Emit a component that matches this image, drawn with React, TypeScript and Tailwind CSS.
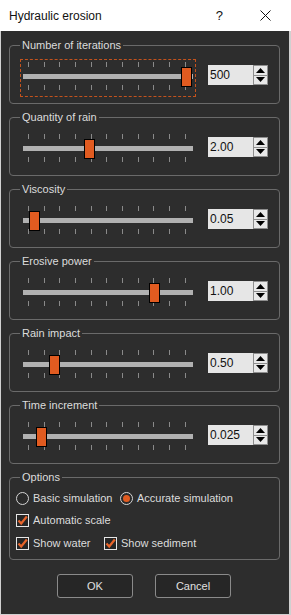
import React from "react";

type SliderRow = {
  label: string;
  value: string;
  thumb: number;
  focus?: boolean;
};

const rows: SliderRow[] = [
  { label: "Number of iterations", value: "500", thumb: 161, focus: true },
  { label: "Quantity of rain", value: "2.00", thumb: 64 },
  { label: "Viscosity", value: "0.05", thumb: 9 },
  { label: "Erosive power", value: "1.00", thumb: 129 },
  { label: "Rain impact", value: "0.50", thumb: 29 },
  { label: "Time increment", value: "0.025", thumb: 16 },
];

const ticks = [8, 24, 39, 55, 71, 86, 102, 118, 133, 149, 165];

const font = { fontFamily: '"Liberation Sans", Arial, sans-serif' };

const Slider = ({ thumb, focus }: { thumb: number; focus?: boolean }) => (
  <div
    className={
      "relative mt-[13px] h-[38px] w-[176px] shrink-0 " +
      (focus ? "border border-dashed border-[#c4531d]" : "border border-transparent")
    }
  >
    {ticks.map((t) => (
      <React.Fragment key={t}>
        <div className="absolute top-[2px] h-[5px] w-px bg-[#8a8a8a]" style={{ left: t - 1 }} />
        <div className="absolute top-[25px] h-[5px] w-px bg-[#8a8a8a]" style={{ left: t - 1 }} />
      </React.Fragment>
    ))}
    <div className="absolute left-[2px] right-[2px] top-[14px] h-[5px] bg-[#b1b1b1]" />
    <div
      className="absolute top-[7px] h-[20px] w-[11px] border border-black bg-[#e15b20]"
      style={{ left: thumb - 1 }}
    />
  </div>
);

const SpinBox = ({ value }: { value: string }) => (
  <div className="ml-[12px] mt-[19px] flex h-[20px] w-[60px] shrink-0 bg-[#e6e6e6]">
    <div className="flex-1 pl-[2px] text-[12px] leading-[20px] text-[#111]">{value}</div>
    <div className="flex w-[15px] flex-col border border-[#8e8e8e]">
      <div className="flex flex-1 items-center justify-center border-b border-[#8e8e8e] bg-[#e8e8e8]">
        <svg width="9" height="5" viewBox="0 0 9 5">
          <path d="M4.5 0 L9 5 L0 5 Z" fill="#000" />
        </svg>
      </div>
      <div className="flex flex-1 items-center justify-center bg-[#e8e8e8]">
        <svg width="9" height="5" viewBox="0 0 9 5">
          <path d="M0 0 L9 0 L4.5 5 Z" fill="#000" />
        </svg>
      </div>
    </div>
  </div>
);

const Group = ({
  label,
  className,
  children,
}: {
  label: string;
  className: string;
  children: React.ReactNode;
}) => (
  <div className={"relative w-[271px] rounded-[4px] border border-[#6a6a6a] " + className}>
    <span className="absolute -top-[8px] left-[10px] bg-[#2d2d2d] px-[2px] text-[11px] leading-[14px] text-[#dcdcdc]">
      {label}
    </span>
    {children}
  </div>
);

const Radio = ({ checked, label, className }: { checked?: boolean; label: string; className?: string }) => (
  <div className={"flex items-center gap-[4px] " + (className ?? "")}>
    <div className="flex h-[13px] w-[13px] items-center justify-center rounded-full border border-[#d6d6d6] bg-[#2a2a2a]">
      {checked && <div className="h-[7px] w-[7px] rounded-full bg-[#e15b20]" />}
    </div>
    <span className="text-[11px] leading-[13px] text-[#dcdcdc]">{label}</span>
  </div>
);

const Check = ({ label, className }: { label: string; className?: string }) => (
  <div className={"flex items-center gap-[4px] " + (className ?? "")}>
    <div className="flex h-[13px] w-[13px] items-center justify-center border border-[#e6e6e6] bg-[#262626]">
      <svg width="11" height="11" viewBox="0 0 11 11">
        <path d="M1.5 5.5 L4.2 8.5 L9.8 1.5" fill="none" stroke="#e8642a" strokeWidth="2.2" />
      </svg>
    </div>
    <span className="text-[11px] leading-[13px] text-[#dcdcdc]">{label}</span>
  </div>
);

export default function App() {
  return (
    <div className="flex h-[615px] w-[291px] flex-col" style={font}>
      <div className="flex h-[31px] shrink-0 items-center bg-white pl-[9px] text-[12px] text-[#111]">
        <span>Hydraulic erosion</span>
        <span className="ml-auto mr-[37px] text-[13px]">?</span>
        <svg className="mr-[20px]" width="11" height="11" viewBox="0 0 11 11">
          <path d="M0.5 0.5 L10.5 10.5 M10.5 0.5 L0.5 10.5" stroke="#111" strokeWidth="1" />
        </svg>
      </div>
      <div className="flex flex-1 flex-col border-b border-l border-r-2 border-[#d0d0d0] bg-[#2d2d2d] pl-[8px]">
        {rows.map((r, i) => (
          <Group key={r.label} label={r.label} className={(i === 0 ? "mt-[14px]" : "mt-[13px]") + " h-[59px]"}>
            <div className="flex items-start pl-[10px]">
              <Slider thumb={r.thumb} focus={r.focus} />
              <SpinBox value={r.value} />
            </div>
          </Group>
        ))}
        <Group label="Options" className="mt-[13px] h-[83px]">
          <div className="flex flex-col pl-[6px] pt-[14px]">
            <div className="flex">
              <Radio label="Basic simulation" className="w-[104px]" />
              <Radio checked label="Accurate simulation" />
            </div>
            <Check label="Automatic scale" className="mt-[9px]" />
            <div className="mt-[10px] flex">
              <Check label="Show water" className="w-[88px]" />
              <Check label="Show sediment" />
            </div>
          </div>
        </Group>
        <div className="mt-[14px] flex gap-[22px] pl-[48px]">
          <button className="h-[24px] w-[76px] rounded-[3px] border border-[#8a8a8a] bg-[#262626] text-[11px] text-[#e0e0e0]">
            OK
          </button>
          <button className="h-[24px] w-[76px] rounded-[3px] border border-[#8a8a8a] bg-[#262626] text-[11px] text-[#e0e0e0]">
            Cancel
          </button>
        </div>
      </div>
    </div>
  );
}
